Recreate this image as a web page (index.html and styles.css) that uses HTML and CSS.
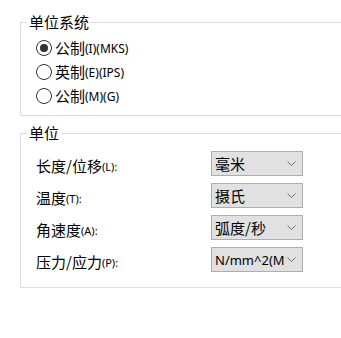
FILE: index.html
```html
<!DOCTYPE html>
<html lang="zh">
<head>
    <meta charset="UTF-8">
    <title>单位系统</title>
    <link rel="stylesheet" href="styles.css">
</head>
<body>
    <fieldset class="group">
        <legend>单位系统</legend>
        <div class="radio-list">
            <label class="radio-row">
                <span class="radio checked"></span>
                <span class="cn">公制</span><span class="hint">(I)(MKS)</span>
            </label>
            <label class="radio-row">
                <span class="radio"></span>
                <span class="cn">英制</span><span class="hint">(E)(IPS)</span>
            </label>
            <label class="radio-row">
                <span class="radio"></span>
                <span class="cn">公制</span><span class="hint">(M)(G)</span>
            </label>
        </div>
    </fieldset>

    <fieldset class="group units">
        <legend>单位</legend>
        <div class="unit-grid">
            <div class="unit-label"><span class="cn">长度/位移</span><span class="hint small">(L):</span></div>
            <div class="dropdown"><span class="value">毫米</span><svg class="chevron" width="9" height="5" viewBox="0 0 9 5"><path d="M0.5 0.5 L4.5 4.5 L8.5 0.5" fill="none" stroke="#6d6d6d" stroke-width="1"/></svg></div>

            <div class="unit-label"><span class="cn">温度</span><span class="hint small">(T):</span></div>
            <div class="dropdown"><span class="value">摄氏</span><svg class="chevron" width="9" height="5" viewBox="0 0 9 5"><path d="M0.5 0.5 L4.5 4.5 L8.5 0.5" fill="none" stroke="#6d6d6d" stroke-width="1"/></svg></div>

            <div class="unit-label"><span class="cn">角速度</span><span class="hint small">(A):</span></div>
            <div class="dropdown"><span class="value">弧度/秒</span><svg class="chevron" width="9" height="5" viewBox="0 0 9 5"><path d="M0.5 0.5 L4.5 4.5 L8.5 0.5" fill="none" stroke="#6d6d6d" stroke-width="1"/></svg></div>

            <div class="unit-label"><span class="cn">压力/应力</span><span class="hint small">(P):</span></div>
            <div class="dropdown"><span class="value latin">N/mm^2(MPa)</span><svg class="chevron" width="9" height="5" viewBox="0 0 9 5"><path d="M0.5 0.5 L4.5 4.5 L8.5 0.5" fill="none" stroke="#6d6d6d" stroke-width="1"/></svg></div>
        </div>
    </fieldset>
</body>
</html>
```

FILE: styles.css
```css
body {
    margin: 0;
    padding-top: 12px;
    background: #fff;
    color: #000;
    font-family: "Noto Sans", "Noto Sans CJK SC", sans-serif;
    overflow: hidden;
}

.group {
    margin: 0 0 0 20px;
    padding: 4px 0 7px 0;
    border: 1px solid #dcdcdc;
    border-right: none;
    min-width: 0;
}

.group legend {
    margin-left: 6px;
    padding: 0 2px;
    font-family: "Noto Sans CJK SC", sans-serif;
    font-size: 15px;
    line-height: 20px;
}

.units {
    margin-top: 7px;
    padding: 8px 0 15px 0;
}

.radio-list {
    display: flex;
    flex-direction: column;
}

.radio-row {
    display: flex;
    align-items: center;
    height: 24px;
    padding-left: 15px;
}

.radio {
    width: 16px;
    height: 16px;
    border: 1px solid #333;
    border-radius: 50%;
    box-sizing: border-box;
    margin-right: 3px;
    display: flex;
    align-items: center;
    justify-content: center;
}

.radio.checked::after {
    content: "";
    width: 8px;
    height: 8px;
    border-radius: 50%;
    background: #333;
}

.cn {
    font-family: "Noto Sans CJK SC", sans-serif;
    font-size: 15px;
    line-height: 20px;
}

.hint {
    font-family: "Noto Sans", sans-serif;
    font-size: 12px;
    line-height: 20px;
    position: relative;
    top: 1px;
}

.hint.small {
    font-size: 11px;
}

.unit-grid {
    display: grid;
    grid-template-columns: 175px 92px;
    grid-auto-rows: 25px;
    row-gap: 7px;
    padding-left: 15px;
}

.unit-label {
    display: flex;
    align-items: center;
    padding-top: 4px;
    white-space: nowrap;
}

.dropdown {
    display: flex;
    align-items: center;
    background: #e1e1e1;
    border: 1px solid #adadad;
    box-sizing: border-box;
    padding: 0 6px 0 3px;
}

.dropdown .value {
    flex: 1;
    overflow: hidden;
    white-space: nowrap;
    font-family: "Noto Sans CJK SC", sans-serif;
    font-size: 15px;
    line-height: 20px;
}

.dropdown .value.latin {
    font-family: "Noto Sans", sans-serif;
    font-size: 13px;
    margin-right: 3px;
}

.chevron {
    flex: none;
}
```
